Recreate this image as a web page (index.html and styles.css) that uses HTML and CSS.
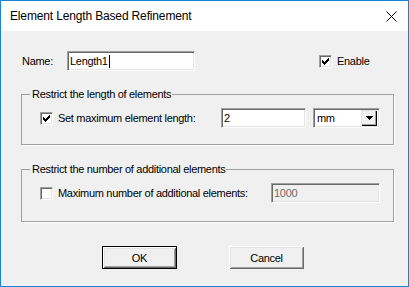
FILE: index.html
```html
<!DOCTYPE html>
<html lang="en">
  <head>
    <meta charset="UTF-8" />
    <title>Element Length Based Refinement</title>
    <link rel="stylesheet" href="styles.css">
  </head>
  <body>
    <div class="window">
      <div class="titlebar">
        <span class="title">Element Length Based Refinement</span>
        <svg class="close" width="11" height="11" viewBox="0 0 11 11">
          <path d="M0.5 0.5L10.5 10.5M10.5 0.5L0.5 10.5" stroke="#000" stroke-width="1" fill="none" />
        </svg>
      </div>

      <div class="dialog">
        <div class="name-row">
          <span class="name-label">Name:</span>
          <div class="textbox name-box">Length1<span class="caret"></span></div>
          <label class="check enable">
            <span class="box">
              <svg width="7" height="7" viewBox="0 0 7 7"><path d="M0 2h1v3H0zM1 3h1v3H1zM2 4h1v3H2zM3 3h1v3H3zM4 2h1v3H4zM5 1h1v3H5zM6 0h1v3H6z" fill="#000" /></svg>
            </span>
            Enable
          </label>
        </div>

        <fieldset class="group group-length">
          <legend>Restrict the length of elements</legend>
          <div class="row">
            <label class="check len-label">
              <span class="box">
                <svg width="7" height="7" viewBox="0 0 7 7"><path d="M0 2h1v3H0zM1 3h1v3H1zM2 4h1v3H2zM3 3h1v3H3zM4 2h1v3H4zM5 1h1v3H5zM6 0h1v3H6z" fill="#000" /></svg>
              </span>
              Set maximum element length:
            </label>
            <div class="textbox len-box">2</div>
            <div class="combo">
              <span class="combo-value">mm</span>
              <span class="combo-btn">
                <svg width="7" height="4" viewBox="0 0 7 4"><path d="M0 0h7v1H0zM1 1h5v1H1zM2 2h3v1H2zM3 3h1v1H3z" fill="#000" /></svg>
              </span>
            </div>
          </div>
        </fieldset>

        <fieldset class="group group-count">
          <legend>Restrict the number of additional elements</legend>
          <div class="row">
            <label class="check count-label">
              <span class="box"></span>
              Maximum number of additional elements:
            </label>
            <div class="textbox count-box disabled">1000</div>
          </div>
        </fieldset>

        <div class="buttons">
          <button class="btn default">OK</button>
          <button class="btn">Cancel</button>
        </div>
      </div>
    </div>
  </body>
</html>
```

FILE: styles.css
```css
:root {
  --face: #f0f0f0;
  --light: #e3e3e3;
  --shadow: #a0a0a0;
  --dark: #696969;
  --accent: #1883d7;
}

* {
  box-sizing: border-box;
}

body {
  margin: 0;
  font-family: "Liberation Sans", Arial, sans-serif;
  font-size: 11px;
  letter-spacing: -0.3px;
  color: #000;
}

.window {
  width: 409px;
  height: 287px;
  border: 1px solid var(--accent);
  background-color: var(--face);
  display: flex;
  flex-direction: column;
}

.titlebar {
  height: 30px;
  flex: none;
  background-color: #fff;
  display: flex;
  align-items: center;
  justify-content: space-between;
  padding: 0 11px 0 9px;
}

.title {
  font-size: 12px;
  letter-spacing: -0.15px;
}

.dialog {
  flex: 1;
  padding: 20px 14px 0 20px;
}

.name-row {
  display: flex;
  align-items: center;
  height: 20px;
}

.name-label {
  width: 46px;
  padding-left: 1px;
}

/* sunken edit field */
.textbox {
  height: 20px;
  background-color: #fff;
  border: 1px solid;
  border-color: var(--shadow) #fff #fff var(--shadow);
  box-shadow: inset 1px 1px var(--dark), inset -1px -1px var(--light);
  padding: 0 2px;
  display: flex;
  align-items: center;
}

.textbox.disabled {
  background-color: var(--face);
  color: #6d6d6d;
}

.name-box {
  width: 128px;
}

.caret {
  width: 1px;
  height: 13px;
  margin-left: 1px;
  background-color: #000;
}

.check {
  display: flex;
  align-items: center;
  gap: 5px;
}

.box {
  width: 13px;
  height: 13px;
  flex: none;
  background-color: #fff;
  border: 1px solid;
  border-color: var(--shadow) #fff #fff var(--shadow);
  box-shadow: inset 1px 1px var(--dark), inset -1px -1px var(--light);
  display: flex;
  align-items: center;
  justify-content: center;
}

.box svg {
  display: block;
}

.enable {
  margin-left: 124px;
}

.group {
  margin: 17px 0 0;
  padding: 8px 0 16px 18px;
  min-width: 0;
  border: 1px solid var(--shadow);
  box-shadow: 1px 1px #fff;
}

.group legend {
  margin-left: -10px;
  padding: 0 1px 0 2px;
}

.group-count {
  margin-top: 18px;
  padding-bottom: 18px;
}

.row {
  display: flex;
  align-items: center;
  height: 20px;
}

.len-label {
  width: 181px;
}

.len-box {
  width: 85px;
}

.combo {
  width: 67px;
  height: 20px;
  margin-left: 7px;
  background-color: #fff;
  border: 1px solid;
  border-color: var(--shadow) #fff #fff var(--shadow);
  box-shadow: inset 1px 1px var(--dark), inset -1px -1px var(--light);
  padding: 2px;
  display: flex;
  align-items: center;
}

.combo-value {
  flex: 1;
  padding-left: 1px;
}

.combo-btn {
  width: 16px;
  height: 16px;
  background-color: var(--face);
  box-shadow: inset 1px 1px var(--light), inset -1px -1px #000, inset -2px -2px var(--shadow);
  display: flex;
  align-items: center;
  justify-content: center;
}

.combo-btn svg {
  display: block;
}

.count-label {
  width: 231px;
}

.count-box {
  width: 109px;
}

.buttons {
  display: flex;
  gap: 52px;
  margin-top: 24px;
  padding-left: 81px;
}

/* raised push button */
.btn {
  width: 75px;
  height: 23px;
  padding: 0;
  font-family: inherit;
  font-size: 11px;
  letter-spacing: inherit;
  color: #000;
  background-color: var(--face);
  border: none;
  border-radius: 0;
  box-shadow: inset 1px 1px #fff, inset -1px -1px var(--dark), inset 2px 2px var(--light), inset -2px -2px var(--shadow);
}

.btn.default {
  border: 1px solid #000;
}
```
